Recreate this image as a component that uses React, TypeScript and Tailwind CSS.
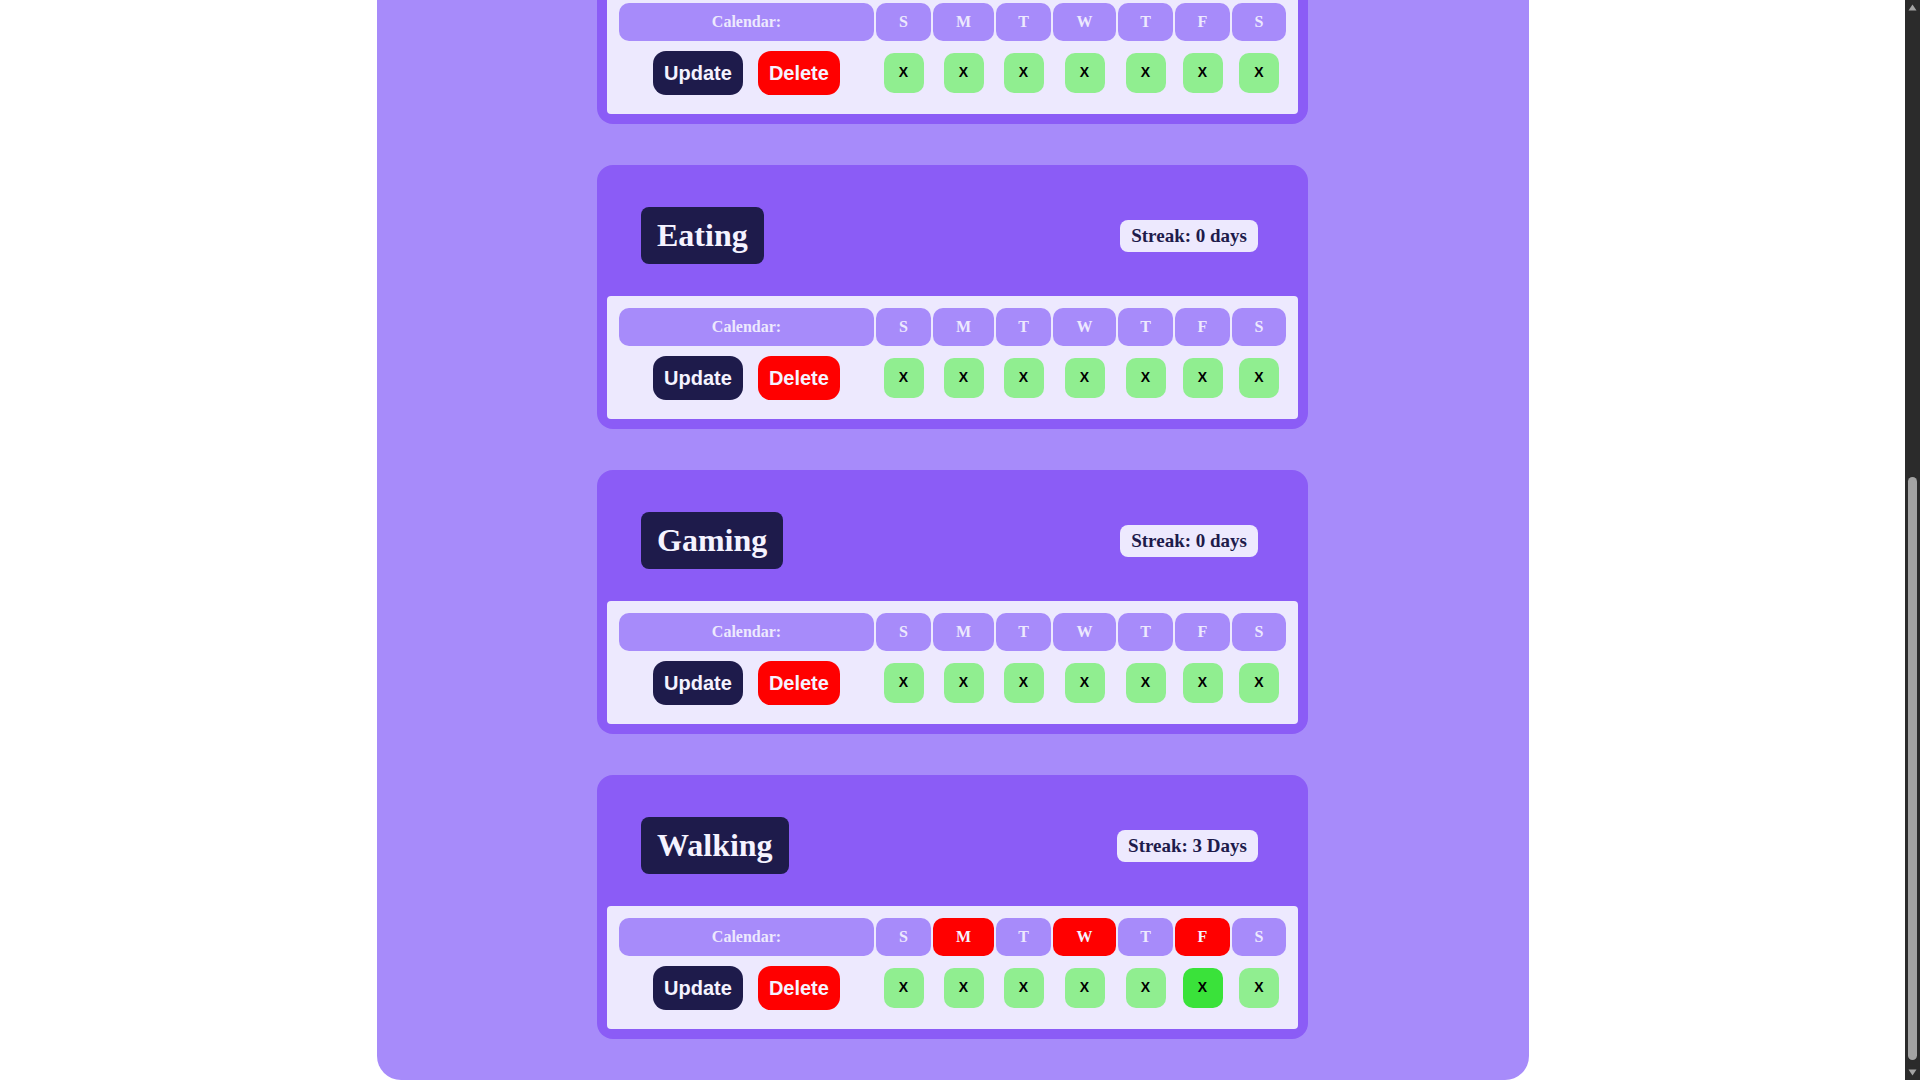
const days = ["S", "M", "T", "W", "T", "F", "S"];

const habits = [
    { id: 4, name: "Eating", streak: "Streak: 0 days", missed: [], done: [] },
    { id: 5, name: "Gaming", streak: "Streak: 0 days", missed: [], done: [] },
    { id: 6, name: "Walking", streak: "Streak: 3 Days", missed: [1, 3, 5], done: [5] },
];

const CalendarGrid = ({ missed = [], done = [] }) => {
    return (
        <div className="grid grid-cols-[255px_55px_61px_55px_63px_55px_55px_54px] grid-rows-[38px_59px] gap-[2px] font-['Liberation_Serif',serif] text-base font-bold text-[#ede9fe]">
            <div className="flex items-center justify-center rounded-[10px] bg-[#a78bfa]">Calendar:</div>
            {days.map((d, i) => (
                <div
                    key={"d" + i}
                    className={`flex items-center justify-center rounded-[10px] ${
                        missed.includes(i) ? "bg-[#ff0000] text-[#f5f3ff]" : "bg-[#a78bfa]"
                    }`}
                >
                    {d}
                </div>
            ))}
            <div className="flex items-center justify-center gap-[15px] font-['Liberation_Sans',Arial,sans-serif] text-[20px] font-bold">
                <button className="flex h-[44px] items-center rounded-[13px] bg-[#1e1b4b] px-[11px] text-[#f5f3ff]">Update</button>
                <button className="flex h-[44px] items-center rounded-[13px] bg-[#ff0000] px-[11px] text-[#f5f3ff]">Delete</button>
            </div>
            {days.map((d, i) => (
                <div key={"x" + i} className="flex items-center justify-center">
                    <button
                        className={`flex h-[40px] w-[40px] items-center justify-center rounded-[10px] font-['Liberation_Sans',Arial,sans-serif] text-[14px] font-bold text-black ${
                            done.includes(i) ? "bg-[#3ae23a]" : "bg-[#90ee90]"
                        }`}
                    >
                        X
                    </button>
                </div>
            ))}
        </div>
    );
};

const HabitCard = ({ habit }) => {
    return (
        <div className="w-fit rounded-2xl bg-[#8b5cf6] p-[10px]">
            <div className="flex h-[121px] items-center justify-between pl-[34px] pr-[40px]">
                <h2 className="rounded-lg bg-[#1e1b4b] px-4 py-[10px] font-['Liberation_Serif',serif] text-[32px] font-bold leading-[37px] text-[#f5f3ff]">
                    {habit.name}
                </h2>
                <span className="rounded-lg bg-[#ede9fe] px-[11px] py-[5px] font-['Liberation_Serif',serif] text-[19px] font-bold leading-[22px] text-[#1e1b4b]">
                    {habit.streak}
                </span>
            </div>
            <div className="rounded bg-[#ede9fe] p-3">
                <CalendarGrid missed={habit.missed} done={habit.done} />
            </div>
        </div>
    );
};

// the card above "Eating", scrolled out of view except for its calendar
const ScrolledCard = () => {
    return (
        <div className="w-fit rounded-b-2xl bg-[#8b5cf6] px-[10px] pb-[10px]">
            <div className="rounded-b bg-[#ede9fe] px-3 pb-3 pt-[3px]">
                <CalendarGrid />
            </div>
        </div>
    );
};

const Scrollbar = () => {
    return (
        <aside className="flex h-screen w-[15px] shrink-0 flex-col items-center bg-[#2b2b2b]">
            <div className="flex h-[15px] w-full items-center justify-center">
                <svg width="9" height="7" viewBox="0 0 9 7">
                    <path d="M4.5 0.5 L8.5 6.5 L0.5 6.5 Z" fill="#a3a3a3" />
                </svg>
            </div>
            <div className="h-[462px]" />
            <div className="h-[583px] w-[9px] rounded-full bg-[#a3a3a3]" />
            <div className="flex-1" />
            <div className="flex h-[15px] w-full items-center justify-center">
                <svg width="9" height="7" viewBox="0 0 9 7">
                    <path d="M0.5 0.5 L8.5 0.5 L4.5 6.5 Z" fill="#a3a3a3" />
                </svg>
            </div>
        </aside>
    );
};

export default function App() {
    return (
        <div className="flex h-screen overflow-hidden bg-white">
            <div className="min-w-0 flex-1">
                <main className="mx-auto flex h-screen max-w-6xl flex-col items-center gap-[41px] rounded-b-3xl bg-[#a78bfa] pb-[41px]">
                    <ScrolledCard />
                    {habits.map((habit) => (
                        <HabitCard key={habit.id} habit={habit} />
                    ))}
                </main>
            </div>
            <Scrollbar />
        </div>
    );
}
